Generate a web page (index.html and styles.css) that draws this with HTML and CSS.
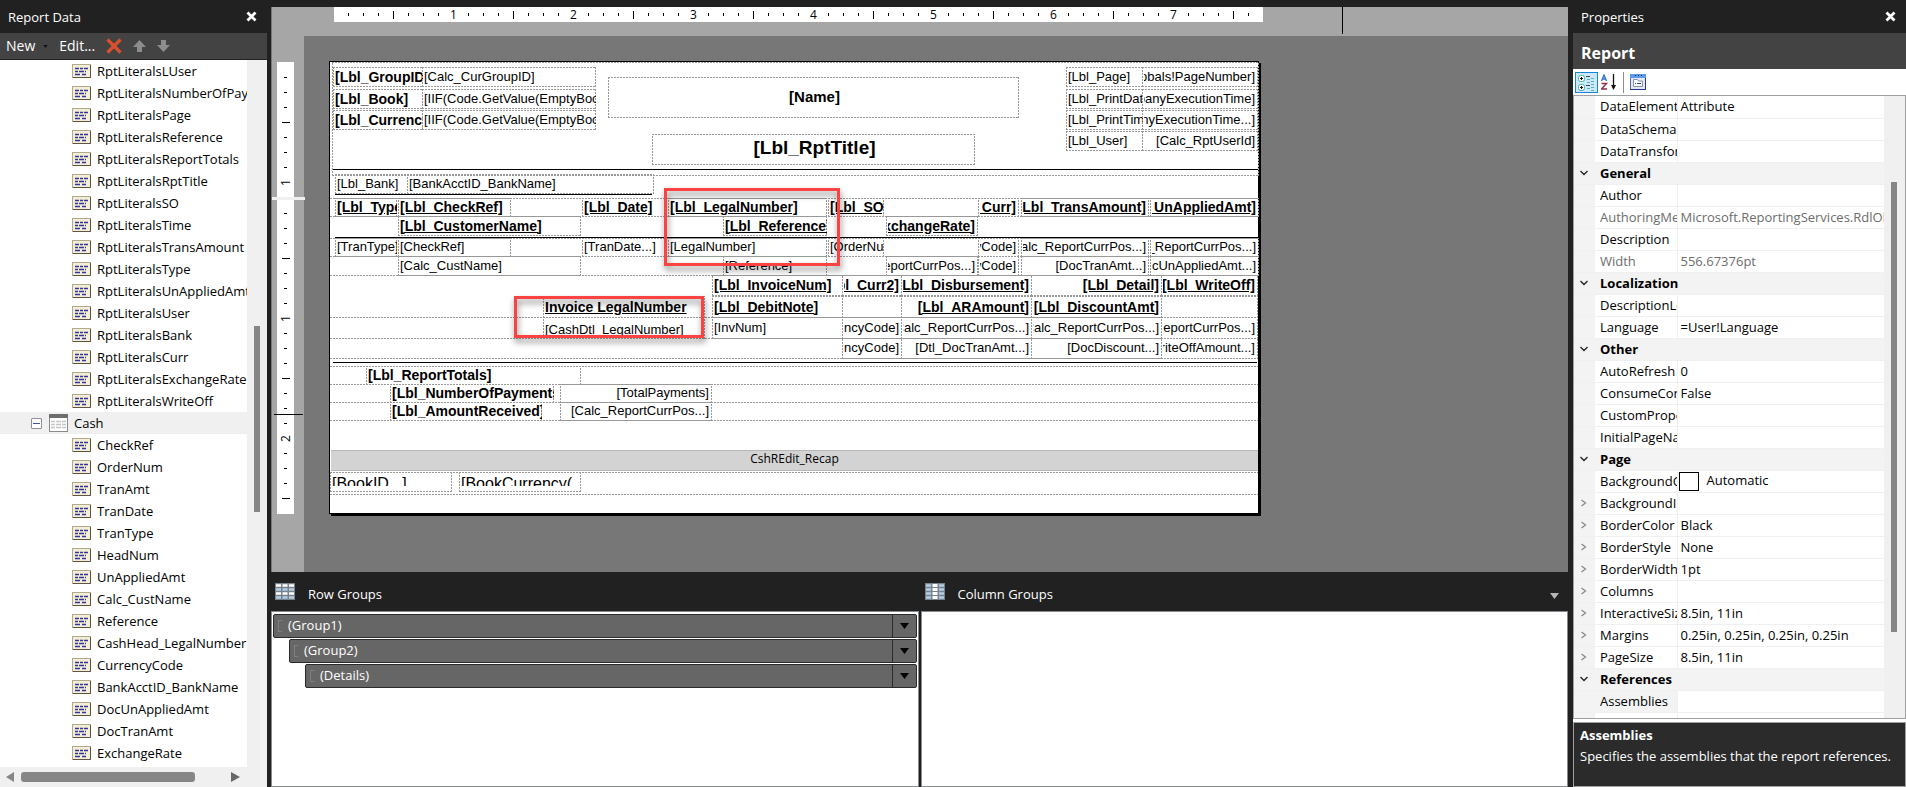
FILE: index.html
```html
<!DOCTYPE html>
<html lang="en">
<head>
    <meta charset="UTF-8">
    <meta name="viewport" content="width=device-width, initial-scale=1.0">
    <title>Report Designer</title>
    <link rel="stylesheet" href="styles.css">
</head>
<body>
    <svg class="symbols" aria-hidden="true">
        <symbol id="icon-field" viewBox="0 0 19 14">
            <rect x="0.5" y="0.5" width="18" height="13" fill="#f3eed8" stroke="#b3a98a"/>
            <path d="M1 13.5h17.5V1" fill="none" stroke="#5f5240"/>
            <path d="M3 4.5h4M8 4.5h3M12 4.5h4M3 7.5h3M7 7.5h5M13 7.5h1M3 10.5h5M10 10.5h4" stroke="#34349c" stroke-width="1.4"/>
        </symbol>
        <symbol id="icon-table" viewBox="0 0 19 18">
            <rect x="0.5" y="0.5" width="18" height="17" fill="#fff" stroke="#8a8a8a"/>
            <rect x="0" y="0" width="19" height="4" fill="#6e6e6e"/>
            <path d="M2 7.5h4M7 7.5h5M13 7.5h4M2 10.5h4M7 10.5h5M13 10.5h4M2 13.5h4M7 13.5h5M13 13.5h4" stroke="#c4c4c4" stroke-width="1.5"/>
        </symbol>
        <symbol id="icon-close" viewBox="0 0 11 11">
            <path d="M1.5 1.5l8 8M9.5 1.5l-8 8" stroke="#fff" stroke-width="2.8"/>
        </symbol>
        <symbol id="icon-down" viewBox="0 0 9 6">
            <path d="M0 0h9L4.5 6z" fill="currentColor"/>
        </symbol>
    </svg>

    <aside class="report-data">
        <header class="panel-title">
            <h2>Report Data</h2>
            <button class="close" aria-label="Close Report Data"><svg width="11" height="11"><use href="#icon-close"/></svg></button>
        </header>
        <div class="data-toolbar">
            <button class="new">New <svg width="5" height="3"><use href="#icon-down"/></svg></button>
            <button class="edit">Edit...</button>
            <button aria-label="Delete"><svg width="16" height="16" viewBox="0 0 16 16"><path d="M1.5 1.5l13 13M14.5 1.5l-13 13" stroke="#d9512c" stroke-width="3.2"/></svg></button>
            <button aria-label="Move up"><svg width="13" height="12" viewBox="0 0 13 12"><path d="M6.5 0L13 7H9v5H4V7H0z" fill="#8c8c8c"/></svg></button>
            <button aria-label="Move down"><svg width="13" height="12" viewBox="0 0 13 12"><path d="M6.5 12L13 5H9V0H4v5H0z" fill="#8c8c8c"/></svg></button>
        </div>
        <div class="tree-area">
            <ul class="tree" id="tree"></ul>
            <div class="tree-scroll"><div class="tree-thumb"></div></div>
        </div>
        <div class="tree-hscroll">
            <svg width="8" height="10" viewBox="0 0 8 10"><path d="M8 0v10L0 5z" fill="#868686"/></svg>
            <div class="tree-hthumb"></div>
            <svg width="9" height="10" viewBox="0 0 9 10"><path d="M0 0v10l9-5z" fill="#686868"/></svg>
        </div>
    </aside>

    <main class="designer">
        <div class="surface">
            <div class="top-ruler">
                <div class="ruler ruler-h" id="ruler-h"></div>
                <div class="top-marker"></div>
            </div>
            <div class="side-ruler">
                <div class="ruler ruler-v" id="ruler-header"></div>
                <div class="ruler-break"></div>
                <div class="ruler ruler-v ruler-body" id="ruler-body"></div>
                <div class="side-marker"></div>
            </div>
            <div class="canvas">
                <div class="page" id="page"></div>
            </div>
        </div>

        <div class="groups">
            <section class="group-pane">
                <header class="group-title">
                    <svg width="20" height="17" viewBox="0 0 20 17">
                        <rect width="20" height="17" fill="#77828c"/>
                        <path d="M1 2.5h5M7.5 2.5h5M14 2.5h5M1 10.5h5M7.5 10.5h5M14 10.5h5" stroke="#fff" stroke-width="2.5"/>
                        <path d="M1 6.5h5M7.5 6.5h5M14 6.5h5M1 14.5h5M7.5 14.5h5M14 14.5h5" stroke="#b4cde4" stroke-width="2.5"/>
                    </svg>
                    <h2>Row Groups</h2>
                </header>
                <div class="group-list">
                    <div class="group-bar"><i></i><span>(Group1)</span><button aria-label="Group1 options"><svg width="9" height="6"><use href="#icon-down"/></svg></button></div>
                    <div class="group-bar level-2"><i></i><span>(Group2)</span><button aria-label="Group2 options"><svg width="9" height="6"><use href="#icon-down"/></svg></button></div>
                    <div class="group-bar level-3"><i></i><span>(Details)</span><button aria-label="Details options"><svg width="9" height="6"><use href="#icon-down"/></svg></button></div>
                </div>
            </section>
            <section class="group-pane">
                <header class="group-title">
                    <svg width="20" height="17" viewBox="0 0 20 17">
                        <rect width="20" height="17" fill="#77828c"/>
                        <path d="M1 2.5h5M14 2.5h5M1 6.5h5M14 6.5h5M1 10.5h5M14 10.5h5M1 14.5h5M14 14.5h5" stroke="#b4cde4" stroke-width="2.5"/>
                        <path d="M7.5 2.5h5M7.5 6.5h5M7.5 10.5h5M7.5 14.5h5" stroke="#fff" stroke-width="3"/>
                    </svg>
                    <h2>Column Groups</h2>
                    <button class="group-menu" aria-label="Grouping options"><svg width="9" height="6"><use href="#icon-down"/></svg></button>
                </header>
                <div class="group-list"></div>
            </section>
        </div>
    </main>

    <aside class="properties">
        <header class="panel-title">
            <h2>Properties</h2>
            <button class="close" aria-label="Close Properties"><svg width="11" height="11"><use href="#icon-close"/></svg></button>
        </header>
        <div class="object-name">Report</div>
        <div class="prop-toolbar">
            <button class="selected" aria-label="Categorized">
                <svg width="17" height="17" viewBox="0 0 17 17">
                    <rect x="0.5" y="1.5" width="6" height="6" rx="2" fill="#fff" stroke="#4db3a8"/>
                    <rect x="0.5" y="10.5" width="6" height="6" rx="2" fill="#fff" stroke="#4db3a8"/>
                    <path d="M2 4.5h3M3.5 3v3M2 13.5h3M3.5 12v3" stroke="#111"/>
                    <path d="M8 2.5h4M8 11.5h4" stroke="#444"/>
                    <path d="M9 5.5h3M9 8.5h3M9 14.5h3M13 4.5h3M13 7.5h3M13 10.5h3M13 13.5h3M13 16.5h3" stroke="#53b5ab"/>
                </svg>
            </button>
            <button aria-label="Alphabetical">
                <svg width="15" height="16" viewBox="0 0 15 16">
                    <path d="M0.5 7L3 1l2.5 6M1.5 5h3" fill="none" stroke="#3178c6" stroke-width="1.4"/>
                    <path d="M0.5 9.5h5l-5 5.5h5.5" fill="none" stroke="#8c3048" stroke-width="1.4"/>
                    <path d="M12.5 0v14" stroke="#111" stroke-width="1.3"/>
                    <path d="M10 11h5l-2.5 5z" fill="#111"/>
                </svg>
            </button>
            <span class="divider"></span>
            <button aria-label="Property Pages">
                <svg width="16" height="16" viewBox="0 0 16 16">
                    <rect x="0.5" y="0.5" width="15" height="15" fill="#e4e8f4" stroke="#5b6ea8"/>
                    <rect width="16" height="4" fill="#5a9bea"/>
                    <path d="M5 1.5h1M8 1.5h1M11 1.5h1" stroke="#123"/>
                    <path d="M3.5 12.5v-7h4l1 1.5h4v5.5z" fill="#fff" stroke="#8d94a8"/>
                    <path d="M5 9.5h1M7 9.5h4" stroke="#2b4b9b"/>
                    <path d="M15.5 4v11.5H0" fill="none" stroke="#27388c"/>
                </svg>
            </button>
        </div>
        <div class="prop-grid">
            <div class="prop-clip">
                <table class="props">
                    <colgroup><col class="col-gutter"><col class="col-name"><col></colgroup>
                    <tbody id="props"></tbody>
                </table>
            </div>
            <div class="prop-scroll"><div class="prop-thumb"></div></div>
        </div>
        <div class="prop-help">
            <h3>Assemblies</h3>
            <p>Specifies the assemblies that the report references.</p>
        </div>
    </aside>

    <script src="script.js"></script>
</body>
</html>
```
FILE: styles.css
```css
* {
    box-sizing: border-box;
}
body {
    margin: 0;
    height: 100vh;
    display: flex;
    overflow: hidden;
    background-color: #212121;
    color: #000;
    font-family: "Open Sans", "Noto Sans", sans-serif;
    font-size: 13px;
    line-height: 18px;
}
h2, h3, p, ul {
    margin: 0;
    padding: 0;
    font-size: 13px;
    font-weight: normal;
}
button {
    border: none;
    padding: 0;
    background: none;
    color: inherit;
    font: inherit;
    display: flex;
    align-items: center;
}
svg {
    flex: none;
}
.symbols {
    position: absolute;
    width: 0;
    height: 0;
}
.panel-title {
    height: 33px;
    flex: none;
    display: flex;
    align-items: center;
    justify-content: space-between;
    padding: 0 10px 0 8px;
    color: #fff;
}

/* Report Data */
.report-data {
    width: 271px;
    flex: none;
    padding-right: 4px;
    display: flex;
    flex-direction: column;
}
.data-toolbar {
    height: 27px;
    flex: none;
    display: flex;
    align-items: center;
    gap: 11px;
    padding-left: 6px;
    background-color: #434343;
    border-bottom: 1px solid #212121;
    color: #fff;
    font-size: 14px;
}
.data-toolbar .new {
    gap: 8px;
}
.data-toolbar .new svg {
    color: #111;
}
.tree-area {
    flex: 1;
    min-height: 0;
    display: flex;
    background-color: #fff;
}
.tree {
    flex: 1;
    min-width: 0;
    overflow: hidden;
    list-style: none;
}
.tree li {
    height: 22px;
    display: flex;
    align-items: center;
    gap: 6px;
    padding-left: 72px;
    white-space: nowrap;
}
.tree li.dataset {
    padding-left: 31px;
    background-color: #f0f0f0;
}
.expander {
    width: 11px;
    height: 11px;
    margin-right: 1px;
    display: flex;
    justify-content: center;
    align-items: center;
    border: 1px solid #919191;
    border-radius: 1px;
    background-color: #fff;
}
.expander::before {
    content: "";
    width: 7px;
    height: 1px;
    background-color: #3a56a8;
}
.tree-scroll {
    width: 20px;
    flex: none;
    padding: 266px 7px 0;
    background-color: #f0f0f0;
}
.tree-thumb {
    height: 186px;
    background-color: #868686;
}
.tree-hscroll {
    height: 20px;
    flex: none;
    display: flex;
    align-items: center;
    padding: 0 27px 0 6px;
    background-color: #f0f0f0;
}
.tree-hthumb {
    flex: 1;
    height: 10px;
    margin: 0 36px 0 7px;
    border-radius: 3px;
    background-color: #868686;
}

/* Design surface */
.designer {
    flex: 1;
    min-width: 0;
    display: flex;
    flex-direction: column;
}
.surface {
    flex: 1;
    min-height: 0;
    margin-top: 7px;
    display: grid;
    grid-template-columns: 33px 1fr;
    grid-template-rows: 29px 1fr;
    background-color: #a6a6a6;
    border-left: 1px solid #777;
    overflow: hidden;
}
.top-ruler {
    grid-column: 1 / 3;
    position: relative;
    padding-left: 62px;
}
.top-marker {
    position: absolute;
    left: 1070px;
    top: 0;
    width: 1px;
    height: 27px;
    background-color: #000;
}
.ruler {
    display: flex;
    background-color: #fff;
    font-size: 12px;
    line-height: 15px;
}
.ruler span {
    flex: none;
    display: flex;
    align-items: center;
    justify-content: center;
    width: 15px;
    height: 15px;
}
.ruler-h {
    width: 929px;
    height: 15px;
    padding-left: 7px;
}
.ruler-v {
    flex-direction: column;
    width: 17px;
    height: 135px;
    margin-left: 5px;
    padding: 8px 1px 0;
}
.ruler-body {
    height: 314px;
    padding-top: 6px;
}
.ruler-v span {
    transform: rotate(-90deg);
}
.ruler i {
    width: 1px;
    height: 3px;
    background-color: #000;
}
.ruler i.half {
    height: 8px;
}
.side-ruler {
    position: relative;
    padding-top: 26px;
}
.ruler-break {
    height: 3px;
    background-color: #f0f0f0;
}
.side-marker {
    position: absolute;
    left: 2px;
    top: 378px;
    width: 29px;
    height: 1px;
    background-color: #000;
}
.canvas {
    background-color: #777;
    padding: 25px;
    margin-left: -1px;
}
.page {
    position: relative;
    width: 930px;
    height: 453px;
    background-color: #fff;
    border: 1px solid #000;
    box-shadow: 2px 2px 0 #000;
    font-family: "Liberation Sans", Arial, sans-serif;
}
.item {
    position: absolute;
    display: flex;
    align-items: center;
    padding: 0 0 1px 2px;
    overflow: clip;
    overflow-clip-margin: content-box;
    white-space: nowrap;
    background:
        repeating-linear-gradient(90deg, #999 0 2px, transparent 2px 3px) 0 0 / 100% 1px no-repeat,
        repeating-linear-gradient(90deg, #999 0 2px, transparent 2px 3px) 0 100% / 100% 1px no-repeat,
        repeating-linear-gradient(0deg, #999 0 2px, transparent 2px 3px) 0 0 / 1px 100% no-repeat,
        repeating-linear-gradient(0deg, #999 0 2px, transparent 2px 3px) 100% 0 / 1px 100% no-repeat;
}
.item span {
    flex: none;
}
.right {
    justify-content: flex-end;
    padding-right: 3px;
}
.center {
    justify-content: center;
}
.bold {
    font-size: 14px;
    font-weight: bold;
}
.under {
    text-decoration: underline;
}
.name {
    font-size: 15px;
    font-weight: bold;
}
.title {
    font-size: 19px;
    font-weight: bold;
    padding-bottom: 4px;
}
.footer {
    font-size: 16px;
    align-items: flex-start;
}
.footer span {
    height: 11px;
    margin-top: 3px;
    overflow: hidden;
}
.clipped span {
    height: 14px;
    overflow: hidden;
}
.band {
    position: absolute;
    display: flex;
    align-items: center;
    justify-content: center;
    padding-bottom: 3px;
    background-color: #d3d3d3;
    border: solid #b8b8b8;
    border-width: 1px 0;
    font-family: "Open Sans", sans-serif;
    font-size: 12px;
}
.rule {
    position: absolute;
    height: 1px;
    background-color: #000;
}
.guide {
    position: absolute;
    height: 1px;
    background: repeating-linear-gradient(90deg, #999 0 2px, transparent 2px 3px);
}
.callout {
    position: absolute;
    border: 3px solid #fb4343;
    filter: drop-shadow(1px 4px 3px rgba(0, 0, 0, 0.5));
}

/* Row and column groups */
.groups {
    height: 215px;
    flex: none;
    display: flex;
    gap: 2px;
}
.group-pane {
    flex: 1;
    display: flex;
    flex-direction: column;
}
.group-title {
    height: 39px;
    flex: none;
    display: flex;
    align-items: center;
    gap: 13px;
    padding: 0 9px 0 4px;
    color: #fff;
}
.group-title > svg {
    margin-bottom: 1px;
}
.group-title h2 {
    margin-top: 5px;
}
.group-menu {
    margin: 8px 0 0 auto;
    color: #b5b5b5;
}
.group-list {
    flex: 1;
    display: flex;
    flex-direction: column;
    gap: 1px;
    padding: 2px 1px;
    background-color: #fff;
    border: 1px solid #868b90;
}
.group-bar {
    height: 24px;
    display: flex;
    align-items: center;
    padding-left: 4px;
    background-color: #666;
    border: 1px solid #2b2b2b;
    border-radius: 2px;
    color: #fff;
}
.group-bar i {
    width: 4px;
    height: 12px;
    margin-right: 6px;
    border: 1px solid #808080;
    border-right: none;
}
.group-bar span {
    flex: 1;
    padding-bottom: 2px;
}
.group-bar button {
    width: 24px;
    height: 22px;
    justify-content: center;
    border-left: 1px solid #2b2b2b;
    color: #000;
}
.level-2 {
    margin-left: 16px;
}
.level-3 {
    margin-left: 32px;
}

/* Properties */
.properties {
    width: 338px;
    flex: none;
    padding-left: 5px;
    display: flex;
    flex-direction: column;
}
.object-name {
    height: 36px;
    flex: none;
    padding: 11px 8px 0;
    background-color: #434343;
    color: #fff;
    font-size: 16px;
    font-weight: bold;
}
.prop-toolbar {
    height: 26px;
    flex: none;
    display: flex;
    align-items: center;
    gap: 3px;
    padding-left: 2px;
    background-color: #fff;
}
.prop-toolbar button.selected {
    width: 23px;
    height: 21px;
    justify-content: center;
    background-color: #cce8ff;
    border: 1px solid #1a83d8;
}
.divider {
    width: 1px;
    height: 21px;
    margin: 0 3px 0 4px;
    background-color: #8c8c8c;
}
.prop-grid {
    flex: 1;
    min-height: 0;
    display: flex;
    border: 1px solid #a0a0a0;
    background-color: #fff;
    box-shadow: 0 3px 0 #fff;
}
.prop-clip {
    flex: 1;
    min-width: 0;
    overflow: hidden;
}
.props {
    width: 100%;
    table-layout: fixed;
    border-collapse: collapse;
}
.col-gutter {
    width: 21px;
}
.col-name {
    width: 82px;
}
.props tr {
    height: 22px;
}
.props th, .props td {
    padding: 0 0 1px;
    overflow: hidden;
    white-space: nowrap;
    text-align: left;
    font-weight: normal;
    border-bottom: 1px solid #f0f0f0;
}
.props td:first-child, .props .category th, .props .active th {
    background-color: #f3f3f3;
}
.props td:first-child svg {
    display: block;
    margin-left: 6px;
}
.props th {
    padding-left: 5px;
    border-right: 1px solid #f0f0f0;
}
.props td + th + td {
    padding-left: 3px;
}
.props .category th {
    font-weight: bold;
    border-right: none;
}
.props .readonly {
    color: #6d6d6d;
}
.swatch {
    display: inline-block;
    width: 20px;
    height: 19px;
    margin: 0 8px 0 -2px;
    border: 1px solid #000;
    vertical-align: middle;
}
.prop-scroll {
    width: 21px;
    flex: none;
    padding: 86px 8px 0 7px;
    background-color: #f0f0f0;
}
.prop-thumb {
    height: 450px;
    background-color: #868686;
}
.prop-help {
    height: 65px;
    flex: none;
    margin-top: 3px;
    padding: 3px 6px;
    background-color: #2b2b2b;
    border: 1px solid #a0a0a0;
    color: #fff;
    white-space: nowrap;
}
.prop-help h3 {
    font-weight: bold;
    margin-bottom: 3px;
}
```
FILE: script.js
```js
const literals = ['LUser', 'NumberOfPayments', 'Page', 'Reference', 'ReportTotals', 'RptTitle', 'SO', 'Time',
    'TransAmount', 'Type', 'UnAppliedAmt', 'User', 'Bank', 'Curr', 'ExchangeRate', 'WriteOff'];
const cashFields = ['CheckRef', 'OrderNum', 'TranAmt', 'TranDate', 'TranType', 'HeadNum', 'UnAppliedAmt',
    'Calc_CustName', 'Reference', 'CashHead_LegalNumber', 'CurrencyCode', 'BankAcctID_BankName',
    'DocUnAppliedAmt', 'DocTranAmt', 'ExchangeRate'];

function fieldRow(name) {
    return `<li><svg width="19" height="14"><use href="#icon-field"/></svg><span>${name}</span></li>`;
}

document.getElementById('tree').innerHTML =
    literals.map(name => fieldRow('RptLiterals' + name)).join('') +
    '<li class="dataset"><span class="expander"></span><svg width="19" height="18"><use href="#icon-table"/></svg><span>Cash</span></li>' +
    cashFields.map(fieldRow).join('');

// Rulers: eight steps to the inch
function drawRuler(id, steps) {
    let html = '';
    for (let i = 1; i <= steps; i++) {
        if (i % 8 === 0) {
            html += `<span>${i / 8}</span>`;
        } else {
            html += `<span><i class="${i % 8 === 4 ? 'half' : ''}"></i></span>`;
        }
    }
    document.getElementById(id).innerHTML = html;
}
drawRuler('ruler-h', 61);
drawRuler('ruler-header', 8);
drawRuler('ruler-body', 20);

// Report items: left, top, right, bottom, text, classes
const items = [
    // page header
    [2, 0, 929, 114, '', ''],
    [3, 5, 93, 25, '[Lbl_GroupID]', 'bold'],
    [92, 5, 266, 25, '[Calc_CurGroupID]', ''],
    [3, 27, 93, 47, '[Lbl_Book]', 'bold'],
    [92, 27, 266, 47, '[IIF(Code.GetValue(EmptyBook', ''],
    [3, 48, 93, 68, '[Lbl_Currency]', 'bold'],
    [92, 48, 266, 68, '[IIF(Code.GetValue(EmptyBook', ''],
    [278, 15, 689, 56, '[Name]', 'name center'],
    [322, 72, 645, 103, '[Lbl_RptTitle]', 'title center'],
    [736, 5, 813, 25, '[Lbl_Page]', ''],
    [812, 5, 928, 25, '[Globals!PageNumber]', 'right'],
    [736, 27, 813, 47, '[Lbl_PrintDate]', ''],
    [812, 27, 928, 47, '[CompanyExecutionTime]', 'right'],
    [736, 48, 813, 68, '[Lbl_PrintTime]', ''],
    [812, 48, 928, 68, '[CompanyExecutionTime...]', 'right'],
    [736, 69, 813, 89, '[Lbl_User]', ''],
    [812, 69, 928, 89, '[Calc_RptUserId]', 'right'],
    [5, 112, 78, 132, '[Lbl_Bank]', ''],
    [77, 112, 324, 132, '[BankAcctID_BankName]', ''],
    // column headings
    [5, 136, 67, 155, '[Lbl_Type]', 'bold under'],
    [68, 136, 181, 155, '[Lbl_CheckRef]', 'bold under'],
    [252, 136, 336, 155, '[Lbl_Date]', 'bold under'],
    [338, 136, 497, 155, '[Lbl_LegalNumber]', 'bold under'],
    [498, 136, 554, 155, '[Lbl_SO]', 'bold under'],
    [648, 136, 689, 155, '[Lbl_Curr]', 'bold under right'],
    [691, 136, 819, 155, '[Lbl_TransAmount]', 'bold under right'],
    [820, 136, 929, 155, '[Lbl_UnAppliedAmt]', 'bold under right'],
    [68, 154, 251, 174, '[Lbl_CustomerName]', 'bold under'],
    [393, 154, 497, 174, '[Lbl_Reference]', 'bold under'],
    [556, 154, 648, 174, '[Lbl_ExchangeRate]', 'bold under right'],
    // payment rows
    [5, 176, 67, 195, '[TranType]', ''],
    [68, 176, 181, 195, '[CheckRef]', ''],
    [252, 176, 336, 195, '[TranDate...]', ''],
    [338, 176, 497, 195, '[LegalNumber]', ''],
    [498, 176, 554, 195, '[OrderNum]', ''],
    [648, 176, 689, 195, '[CurrencyCode]', 'right'],
    [691, 176, 819, 195, '[Calc_ReportCurrPos...]', 'right'],
    [820, 176, 929, 195, '[Calc_ReportCurrPos...]', 'right'],
    [68, 194, 251, 214, '[Calc_CustName]', ''],
    [393, 194, 497, 214, '[Reference]', ''],
    [556, 194, 648, 214, '[Calc_ReportCurrPos...]', 'right'],
    [648, 194, 689, 214, '[CurrencyCode]', 'right'],
    [691, 194, 819, 214, '[DocTranAmt...]', 'right'],
    [820, 194, 929, 214, '[DocUnAppliedAmt...]', 'right'],
    // invoice details
    [382, 213, 513, 234, '[Lbl_InvoiceNum]', 'bold under'],
    [512, 213, 572, 234, '[Lbl_Curr2]', 'bold under right'],
    [571, 213, 702, 234, '[Lbl_Disbursement]', 'bold under right'],
    [701, 213, 832, 234, '[Lbl_Detail]', 'bold under right'],
    [831, 213, 928, 234, '[Lbl_WriteOff]', 'bold under right'],
    [213, 234, 375, 256, 'Invoice LegalNumber', 'bold under'],
    [382, 234, 513, 256, '[Lbl_DebitNote]', 'bold under'],
    [512, 234, 572, 256, '', ''],
    [571, 234, 702, 256, '[Lbl_ARAmount]', 'bold under right'],
    [701, 234, 832, 256, '[Lbl_DiscountAmt]', 'bold under right'],
    [831, 234, 928, 256, '', ''],
    [213, 255, 375, 277, '[CashDtl_LegalNumber]', 'clipped'],
    [382, 255, 513, 277, '[InvNum]', ''],
    [512, 255, 572, 277, '[CurrencyCode]', 'right'],
    [571, 255, 702, 277, '[Calc_ReportCurrPos...]', 'right'],
    [701, 255, 832, 277, '[Calc_ReportCurrPos...]', 'right'],
    [831, 255, 928, 277, '[Calc_ReportCurrPos...]', 'right'],
    [512, 276, 572, 297, '[CurrencyCode]', 'right'],
    [571, 276, 702, 297, '[Dtl_DocTranAmt...]', 'right'],
    [701, 276, 832, 297, '[DocDiscount...]', 'right'],
    [831, 276, 928, 297, '[DocWriteOffAmount...]', 'right'],
    // totals
    [36, 304, 251, 323, '[Lbl_ReportTotals]', 'bold'],
    [60, 322, 224, 341, '[Lbl_NumberOfPayments]', 'bold'],
    [230, 322, 382, 341, '[TotalPayments]', 'right'],
    [60, 340, 212, 359, '[Lbl_AmountReceived]', 'bold'],
    [230, 340, 382, 359, '[Calc_ReportCurrPos...]', 'right'],
    // page footer
    [0, 410, 122, 430, '[BookID...]', 'footer'],
    [129, 410, 251, 430, '[BookCurrency(', 'footer']
];
// Table row edges
const guides = [136, 154, 176, 194, 213, 255, 276, 296, 304, 322, 340, 358, 410, 432];
// Solid lines: left, top, right
const rules = [[3, 107, 928], [5, 132, 322], [5, 175, 928], [3, 300, 927]];
const callouts = [[334, 126, 510, 204], [184, 234, 374, 276]];

function box(className, left, top, right, bottom, content) {
    return `<div class="${className}" style="left:${left}px;top:${top}px;width:${right - left}px;height:${bottom - top}px">${content}</div>`;
}

document.getElementById('page').innerHTML =
    guides.map(y => box('guide', 0, y, 928, y + 1, '')).join('') +
    items.map(([l, t, r, b, text, cls]) => box('item ' + cls, l, t, r, b, text ? `<span>${text}</span>` : '')).join('') +
    rules.map(([l, t, r]) => box('rule', l, t, r, t + 1, '')).join('') +
    box('band', 1, 388, 928, 409, 'CshREdit_Recap') +
    callouts.map(([l, t, r, b]) => box('callout', l, t, r, b, '')).join('');

// Property grid: kind, name, value
const props = [
    ['', 'DataElementStyle', 'Attribute'],
    ['', 'DataSchema', ''],
    ['', 'DataTransform', ''],
    ['category', 'General'],
    ['', 'Author', ''],
    ['readonly', 'AuthoringMetadata', 'Microsoft.ReportingServices.RdlObjectModel'],
    ['', 'Description', ''],
    ['readonly', 'Width', '556.67376pt'],
    ['category', 'Localization'],
    ['', 'DescriptionLocID', ''],
    ['', 'Language', '=User!Language'],
    ['category', 'Other'],
    ['', 'AutoRefresh', '0'],
    ['', 'ConsumeContainerWhitespace', 'False'],
    ['', 'CustomProperties', ''],
    ['', 'InitialPageName', ''],
    ['category', 'Page'],
    ['', 'BackgroundColor', '<span class="swatch"></span>Automatic'],
    ['group', 'BackgroundImage', ''],
    ['group', 'BorderColor', 'Black'],
    ['group', 'BorderStyle', 'None'],
    ['group', 'BorderWidth', '1pt'],
    ['group', 'Columns', ''],
    ['group', 'InteractiveSize', '8.5in, 11in'],
    ['group', 'Margins', '0.25in, 0.25in, 0.25in, 0.25in'],
    ['group', 'PageSize', '8.5in, 11in'],
    ['category', 'References'],
    ['active', 'Assemblies', ''],
    ['', '', '']
];
const arrows = {
    category: '<svg width="8" height="6" viewBox="0 0 8 6"><path d="M0.5 1L4 4.5 7.5 1" fill="none" stroke="#222" stroke-width="1.3"/></svg>',
    group: '<svg width="8" height="8" viewBox="0 0 8 8"><path d="M1.5 1L5.5 4 1.5 7" fill="none" stroke="#8a8a8a" stroke-width="1.3"/></svg>'
};

document.getElementById('props').innerHTML = props.map(([kind, name, value]) =>
    `<tr class="${kind}"><td>${arrows[kind] || ''}</td>` +
    (kind === 'category' ? `<th colspan="2">${name}</th>` : `<th>${name}</th><td>${value}</td>`) +
    '</tr>').join('');
```
